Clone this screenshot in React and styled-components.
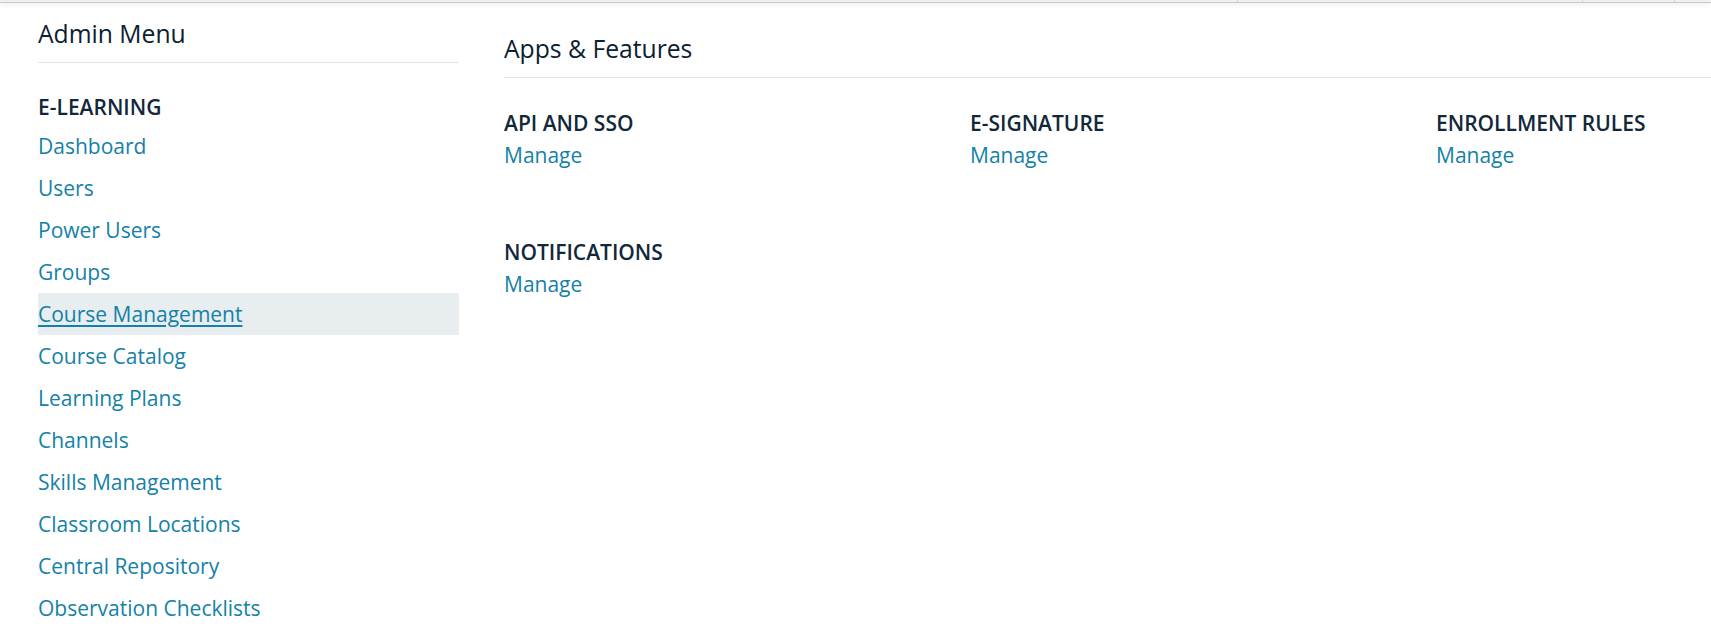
import React from "react";
import styled, { createGlobalStyle } from "styled-components";

const GlobalStyle = createGlobalStyle`
  html, body {
    margin: 0;
    padding: 0;
    background: #ffffff;
    overflow: hidden;
  }
  body {
    font-family: "Open Sans", "Noto Sans", Arial, sans-serif;
    color: #0b2131;
  }
`;

const TopStrip = styled.div`
  display: flex;
  height: 2px;
  background: #eef0f2;
  border-bottom: 1px solid #c4c8cc;
  box-shadow: 0 2px 5px rgba(0, 0, 0, 0.08);
`;

const StripCell = styled.div`
  flex: ${(p) => (p.$w ? `0 0 ${p.$w}px` : "1")};
  border-right: ${(p) => (p.$tick ? "1px solid #d2d5d9" : "none")};
`;

const Layout = styled.div`
  display: flex;
  padding-left: 38px;
`;

const Sidebar = styled.aside`
  flex: 0 0 421px;
  padding-top: 15px;
`;

const MenuTitle = styled.h2`
  margin: 0;
  padding-bottom: 12px;
  font-size: 24.7px;
  line-height: 32px;
  font-weight: 400;
  border-bottom: 1px solid #e2e5e8;
`;

const SectionLabel = styled.div`
  margin-top: 26px;
  font-size: 21px;
  line-height: 36px;
  font-weight: 600;
  color: #12283a;
  text-transform: uppercase;
`;

const MenuList = styled.ul`
  list-style: none;
  margin: 0;
  padding: 0;
`;

const MenuItem = styled.li`
  height: 42px;
  line-height: 42px;
  font-size: 21px;
  background: ${(p) => (p.$active ? "#e8edef" : "transparent")};
`;

const MenuLink = styled.a`
  color: #1481a8;
  text-decoration: ${(p) => (p.$active ? "underline" : "none")};
  text-decoration-thickness: 2px;
  text-underline-offset: 3px;
`;

const Main = styled.main`
  flex: 1;
  margin-left: 45px;
  padding-top: 30px;
`;

const PageTitle = styled.h1`
  margin: 0;
  padding-bottom: 12px;
  font-size: 24.7px;
  line-height: 32px;
  font-weight: 400;
  border-bottom: 1px solid #e2e5e8;
`;

const FeatureGrid = styled.div`
  display: grid;
  grid-template-columns: repeat(3, 466px);
  row-gap: 65px;
  margin-top: 29px;
`;

const Feature = styled.div`
  display: flex;
  flex-direction: column;
`;

const FeatureName = styled.div`
  font-size: 21px;
  line-height: 32px;
  font-weight: 600;
  color: #12283a;
  text-transform: uppercase;
  white-space: nowrap;
`;

const ManageLink = styled.a`
  font-size: 21px;
  line-height: 32px;
  color: #1481a8;
  text-decoration: none;
  align-self: flex-start;
`;

const menu = [
  "Dashboard",
  "Users",
  "Power Users",
  "Groups",
  "Course Management",
  "Course Catalog",
  "Learning Plans",
  "Channels",
  "Skills Management",
  "Classroom Locations",
  "Central Repository",
  "Observation Checklists",
];

const features = ["API and SSO", "E-Signature", "Enrollment Rules", "Notifications"];

export default function App() {
  return (
    <>
      <GlobalStyle />
      <TopStrip>
        <StripCell $w={1237} $tick />
        <StripCell $w={344} $tick />
        <StripCell $w={91} $tick />
        <StripCell />
      </TopStrip>
      <Layout>
        <Sidebar>
          <MenuTitle>Admin Menu</MenuTitle>
          <SectionLabel>E-Learning</SectionLabel>
          <MenuList>
            {menu.map((item) => {
              const active = item === "Course Management";
              return (
                <MenuItem key={item} $active={active}>
                  <MenuLink href="#" $active={active}>
                    {item}
                  </MenuLink>
                </MenuItem>
              );
            })}
          </MenuList>
        </Sidebar>
        <Main>
          <PageTitle>Apps &amp; Features</PageTitle>
          <FeatureGrid>
            {features.map((f) => (
              <Feature key={f}>
                <FeatureName>{f}</FeatureName>
                <ManageLink href="#">Manage</ManageLink>
              </Feature>
            ))}
          </FeatureGrid>
        </Main>
      </Layout>
    </>
  );
}
